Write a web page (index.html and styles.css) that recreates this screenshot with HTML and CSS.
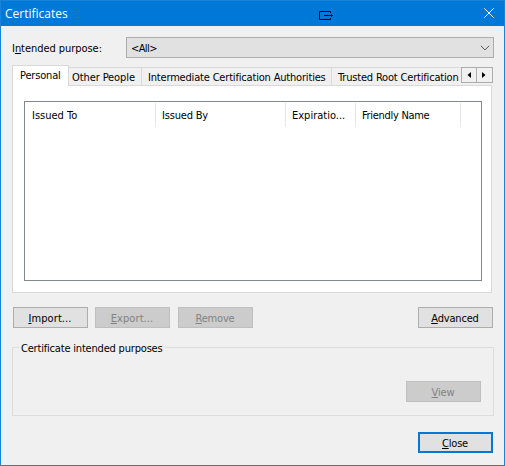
FILE: index.html
```html
<!DOCTYPE html>
<html lang="en">
<head>
<meta charset="utf-8">
<title>Certificates</title>
<link rel="stylesheet" href="styles.css">
</head>
<body>
<main class="window">
  <header class="titlebar">
    <h1 class="title">Certificates</h1>
    <svg class="dock-icon" width="15" height="10" viewBox="0 0 15 10"><path d="M11.5 2V.5H.5v8h11V7M5 4.5h9M12.5 3v3" /></svg>
    <svg class="close-icon" width="10" height="10" viewBox="0 0 10 10"><path d="M.3.3l9.4 9.4M9.7.3L.3 9.7"/></svg>
  </header>
  <div class="purpose">
    <span class="purpose-label">I<u>n</u>tended purpose:</span>
    <div class="select"><span class="value">&lt;All&gt;</span><svg width="10" height="6" viewBox="0 0 10 6"><path d="M.9.8L5 4.9 9.1.8"/></svg></div>
  </div>
  <div class="tabs">
    <div class="tab active">Personal</div>
    <div class="tab other">Other People</div>
    <div class="tab intermediate">Intermediate Certification Authorities</div>
    <div class="tab trusted">Trusted Root Certification</div>
    <div class="scroller">
      <span class="arrow"><svg width="4" height="6" viewBox="0 0 4 6"><path d="M4 0v6L.5 3z"/></svg></span>
      <span class="arrow"><svg width="4" height="6" viewBox="0 0 4 6"><path d="M0 0v6l3.5-3z"/></svg></span>
    </div>
  </div>
  <section class="panel">
    <div class="list">
      <div class="columns">
        <span class="issued-to">Issued To</span>
        <span class="issued-by">Issued By</span>
        <span class="expiration">Expiratio...</span>
        <span class="friendly">Friendly Name</span>
      </div>
    </div>
  </section>
  <div class="actions">
    <div class="button wide"><u>I</u>mport...</div>
    <div class="button disabled wide"><u>E</u>xport...</div>
    <div class="button disabled remove"><u>R</u>emove</div>
    <div class="button advanced"><u>A</u>dvanced</div>
  </div>
  <section class="group">
    <h2 class="legend">Certificate intended purposes</h2>
    <div class="button disabled view"><u>V</u>iew</div>
  </section>
  <div class="footer"><div class="button default"><u>C</u>lose</div></div>
</main>
</body>
</html>
```
FILE: styles.css
```css
* { box-sizing: border-box; }
body {
  margin: 0;
  font: 11px/13px "DejaVu Sans Condensed", "DejaVu Sans", sans-serif;
  letter-spacing: -0.18px;
  color: #000;
}
svg { display: block; fill: none; }
u { text-underline-offset: 1px; text-decoration-thickness: 1px; text-decoration-skip-ink: none; }
.window {
  width: 505px;
  height: 466px;
  border: 1px solid #1883d7;
  background: #f0f0f0;
  overflow: hidden;
  white-space: nowrap;
}
.titlebar {
  display: flex;
  height: 25px;
  padding-left: 4px;
  background: #0078d7;
}
.title {
  width: 314px;
  margin: 0;
  font: 400 12px/25px "Open Sans", sans-serif;
  letter-spacing: 0;
  color: #fff;
}
.dock-icon { margin-top: 10px; stroke: #000; }
.close-icon { margin: 7px 0 0 150px; stroke: #fff; }
.purpose { display: flex; padding: 11px 0 0 11px; }
.purpose-label { width: 114px; padding-top: 5px; letter-spacing: -0.05px; }
.select {
  display: flex;
  justify-content: space-between;
  width: 368px;
  height: 21px;
  padding: 4px 3px 0 4px;
  border: 1px solid #adadad;
  background: #e1e1e1;
}
.value { letter-spacing: -0.6px; }
.select svg { margin-top: 3px; stroke: #555; }
.tabs {
  display: flex;
  align-items: flex-end;
  height: 20px;
  margin: 7px 0 0 11px;
}
.tab {
  height: 18px;
  padding: 3px 0 0 6px;
  border-top: 1px solid #d9d9d9;
  border-right: 1px solid #d9d9d9;
}
.tab.active {
  position: relative;
  width: 57px;
  height: 21px;
  margin-bottom: -1px;
  padding: 3px 0 0 7px;
  border-left: 1px solid #d9d9d9;
  background: #fff;
}
.tab.other { width: 73px; padding-left: 3px; letter-spacing: -0.1px; }
.tab.intermediate { width: 190px; }
.tab.trusted { width: 129px; padding-left: 6px; border-right: 0; }
.scroller { display: flex; align-self: flex-start; margin-top: 2px; }
.arrow {
  display: flex;
  align-items: center;
  justify-content: center;
  width: 16px;
  height: 16px;
  border: 1px solid #adadad;
  background: #f0f0f0;
}
.arrow + .arrow { width: 17px; margin-left: -1px; }
.arrow svg { margin: -1px 1px 0 0; fill: #000; }
.panel {
  width: 480px;
  height: 208px;
  margin-left: 11px;
  padding: 15px 0 0 11px;
  border: 1px solid #d9d9d9;
  background: #fff;
}
.list {
  width: 458px;
  height: 180px;
  padding-top: 1px;
  border: 1px solid #828790;
}
.columns { display: flex; }
.columns span {
  height: 24px;
  padding: 6px 0 0 6px;
  border-right: 1px solid #e5e5e5;
}
.columns .issued-to { width: 131px; padding-left: 7px; letter-spacing: 0; }
.columns .issued-by { width: 130px; }
.columns .expiration { width: 70px; letter-spacing: 0; }
.columns .friendly { width: 105px; letter-spacing: -0.3px; }
.actions { display: flex; padding: 14px 0 0 12px; gap: 7px; }
.button {
  width: 75px;
  height: 21px;
  padding: 4px 1px 0 0;
  border: 1px solid #adadad;
  background: #e1e1e1;
  text-align: center;
}
.wide { letter-spacing: 0.1px; }
.disabled { border-color: #bfbfbf; background: #ccc; color: #838383; }
.remove { margin-left: 1px; }
.advanced { margin-left: 158px; }
.group {
  width: 482px;
  height: 69px;
  margin: 19px 0 0 11px;
  border: 1px solid #dcdcdc;
}
.legend {
  width: 146px;
  margin: -6px 0 0 6px;
  padding-left: 2px;
  font: inherit;
  letter-spacing: -0.19px;
  background: #f0f0f0;
}
.view { margin: 26px 0 0 393px; }
.footer { padding: 16px 0 0 417px; }
.default { padding-top: 3px; border: 2px solid #0078d7; }
```
